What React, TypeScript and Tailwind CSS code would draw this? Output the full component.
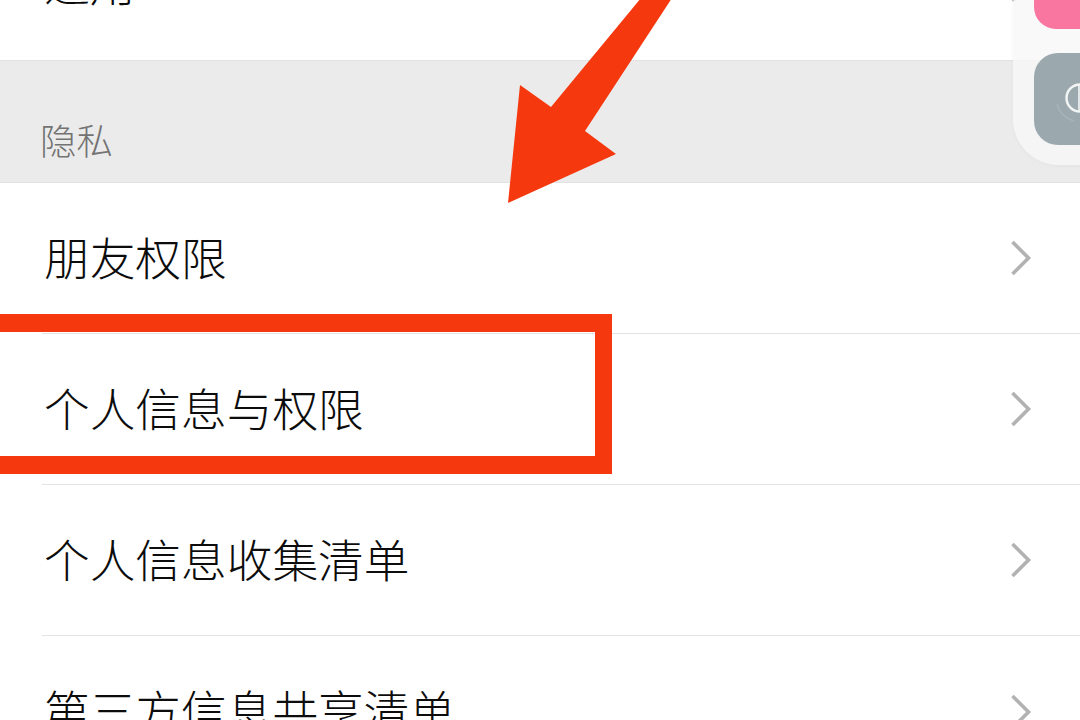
const font = { fontFamily: '"Noto Sans CJK SC", "Noto Sans", sans-serif' };

function Chevron() {
  return (
    <svg width="22" height="36" viewBox="0 0 22 36" fill="none" className="shrink-0">
      <path d="M2.5 2 L18.5 18 L2.5 34" stroke="#b2b2b2" strokeWidth="3.6" />
    </svg>
  );
}

function Row({ label, divider = true, className = "" }: { label: string; divider?: boolean; className?: string }) {
  return (
    <div className={`h-[151px] shrink-0 pl-[42px] bg-white ${className}`}>
      <div className={`h-full flex items-center justify-between pr-[48px] ${divider ? "border-b border-[#e3e3e3]" : ""}`}>
        <span className="pl-[2px] pb-[3px] text-[45.7px] leading-none text-[#0c0c0c] font-light whitespace-nowrap">{label}</span>
        <Chevron />
      </div>
    </div>
  );
}

export default function App() {
  return (
    <div className="relative h-[720px] w-[1080px] overflow-hidden bg-white" style={font}>
      <div className="flex flex-col -mt-[91px]">
        <Row label="通用" divider={false} />
        <div className="h-[123px] shrink-0 bg-[#ebebeb] border-y border-[#e2e2e2] flex items-end pl-[40px] pb-[25px]">
          <span className="text-[36.4px] leading-none text-[#737373] font-light">隐私</span>
        </div>
        <Row label="朋友权限" />
        <Row label="个人信息与权限" />
        <Row label="个人信息收集清单" />
        <Row label="第三方信息共享清单" divider={false} />
      </div>

      {/* Floating panel */}
      <div className="absolute left-[1013px] -top-[40px] w-[120px] h-[205px] rounded-[46px] bg-[#f8f8f9]/80 shadow-[0_1px_4px_rgba(0,0,0,0.03)] pl-[21px] flex flex-col gap-[24px]">
        <div className="mt-[-6px] h-[75px] w-[90px] shrink-0 rounded-[22px] bg-[#f976a1]" />
        <div className="relative h-[92px] w-[90px] shrink-0 rounded-[24px] bg-[#9ba9ae]">
          <svg width="60" height="92" viewBox="0 0 60 92" fill="none" className="absolute left-0 top-0">
            <circle cx="46" cy="45" r="13.5" stroke="#f3f5f5" strokeWidth="2.4" />
            <path d="M45 32 V58" stroke="#f3f5f5" strokeWidth="1.6" />
            <path d="M23 51 A24 24 0 0 0 40 68" stroke="#aab6ba" strokeWidth="1.2" />
          </svg>
        </div>
      </div>

      {/* Annotation: arrow */}
      <svg width="1080" height="720" viewBox="0 0 1080 720" className="absolute left-0 top-0 pointer-events-none">
        <polygon points="520,85 551,107 641,-2 672,-2 585,131 616,154 508,203" fill="#f6380f" />
      </svg>

      {/* Annotation: box */}
      <div className="absolute -left-[20px] top-[314px] h-[160px] w-[632px] border-y-[18px] border-r-[17px] border-[#f6380f]" />
    </div>
  );
}
